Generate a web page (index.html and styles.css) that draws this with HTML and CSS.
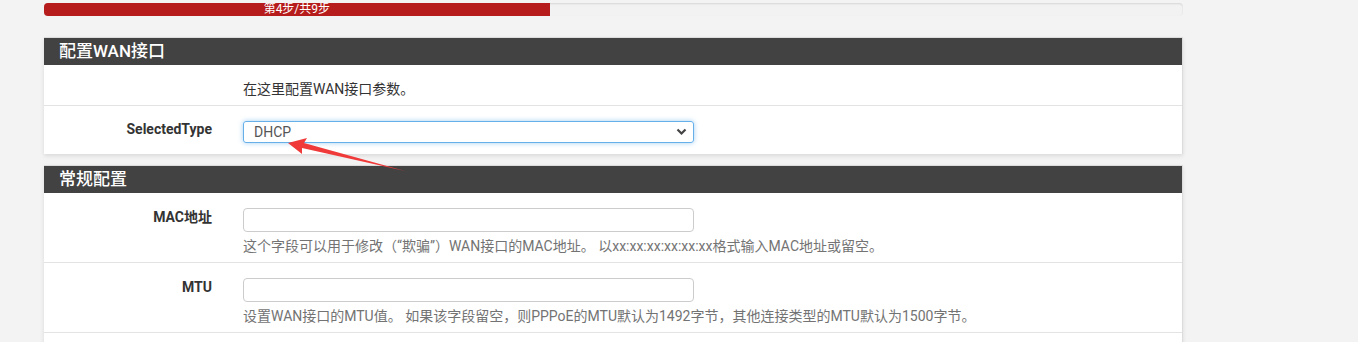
FILE: index.html
```html
<!DOCTYPE html>
<html lang="zh-CN">
<head>
  <meta charset="UTF-8">
  <title>向导</title>
  <link rel="stylesheet" href="styles.css">
</head>
<body>
  <div class="container">
    <div class="progress">
      <div class="progress-bar" style="width: 44.4%">第4步/共9步</div>
    </div>

    <div class="panel">
      <div class="panel-heading">配置WAN接口</div>
      <div class="panel-body">
        <div class="form-row intro">
          <div class="label"></div>
          <div class="field desc">在这里配置WAN接口参数。</div>
        </div>
        <div class="form-row select-row">
          <div class="label">SelectedType</div>
          <div class="field">
            <div class="select">
              <span>DHCP</span>
              <svg class="chevron" width="11" height="8" viewBox="0 0 11 8"><path d="M1.5 1.5 L5.5 5.5 L9.5 1.5" fill="none" stroke="#444" stroke-width="2.2"/></svg>
            </div>
          </div>
        </div>
      </div>
    </div>

    <div class="panel">
      <div class="panel-heading">常规配置</div>
      <div class="panel-body">
        <div class="form-row">
          <div class="label">MAC地址</div>
          <div class="field">
            <div class="input"></div>
            <div class="help">这个字段可以用于修改（“欺骗”）WAN接口的MAC地址。 以xx:xx:xx:xx:xx:xx格式输入MAC地址或留空。</div>
          </div>
        </div>
        <div class="form-row">
          <div class="label">MTU</div>
          <div class="field">
            <div class="input"></div>
            <div class="help">设置WAN接口的MTU值。 如果该字段留空，则PPPoE的MTU默认为1492字节，其他连接类型的MTU默认为1500字节。</div>
          </div>
        </div>
        <div class="spacer"></div>
      </div>
    </div>
  </div>

  <svg class="arrow" width="1358" height="342" viewBox="0 0 1358 342">
    <polygon points="288,143 307,138 304,143 405,171 302,148 302,154" fill="#f03a3a"/>
  </svg>
</body>
</html>
```

FILE: styles.css
```css
body {
  margin: 0;
  background: #f3f3f3;
  font-family: Roboto, "Noto Sans CJK SC", sans-serif;
  font-size: 14px;
  color: #333;
}

.container {
  width: 1139px;
  margin-left: 44px;
  padding-top: 3px;
}

.progress {
  height: 13px;
  background: #f2f2f2;
  border-radius: 4px;
  box-shadow: inset 0 1px 2px rgba(0,0,0,0.12);
  overflow: hidden;
}
.progress-bar {
  height: 13px;
  background: #b71c1c;
  color: #fff;
  font-size: 12px;
  line-height: 13px;
  text-align: center;
}

.panel {
  margin-top: 21px;
  background: #fff;
  border-top: 1px solid #dcdcdc;
  border-right: 1px solid #dcdcdc;
  box-shadow: 0 2px 4px rgba(0,0,0,0.10);
}
.panel + .panel { margin-top: 11px; }

.panel-heading {
  height: 27px;
  line-height: 27px;
  background: #424242;
  color: #fff;
  font-size: 17px;
  font-weight: 500;
  padding-left: 15px;
}

.form-row {
  display: flex;
  border-bottom: 1px solid #e3e3e3;
  padding: 15px 0 7px;
}
.spacer { height: 20px; }

.label {
  flex: none;
  width: 183px;
  box-sizing: border-box;
  padding-right: 15px;
  text-align: right;
  font-weight: bold;
  line-height: 18px;
}
.field {
  padding-left: 16px;
}

.intro { padding: 15px 0 7px; }
.desc { line-height: 18px; }

.select-row { padding: 15px 0 11px; border-bottom: none; }
.select-row .label { margin-top: -1px; }
.select {
  width: 451px;
  height: 22px;
  box-sizing: border-box;
  border: 1px solid #66afe9;
  border-radius: 3px;
  box-shadow: 0 0 5px rgba(102,175,233,0.6);
  display: flex;
  align-items: center;
  justify-content: space-between;
  padding: 0 6px 0 10px;
  color: #555;
  font-size: 14px;
}

.input {
  width: 451px;
  height: 24px;
  box-sizing: border-box;
  border: 1px solid #ccc;
  border-radius: 4px;
}
.help {
  margin-top: 5px;
  line-height: 18px;
  color: #737373;
}

.arrow {
  position: absolute;
  left: 0;
  top: 0;
  pointer-events: none;
}
```
